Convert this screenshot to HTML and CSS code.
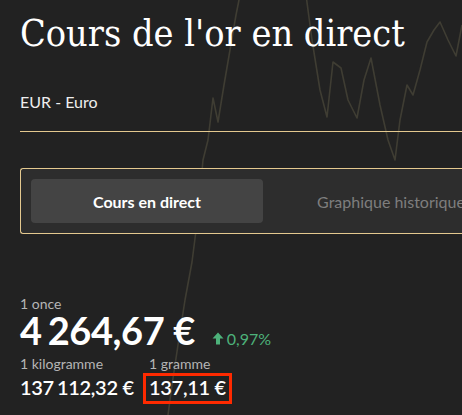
FILE: index.html
```html
<!DOCTYPE html>
<html lang="fr">
<head>
<meta charset="utf-8">
<title>Cours de l'or en direct</title>
<link rel="stylesheet" href="styles.css">
</head>
<body>
<div class="page">
  <svg class="chart-bg" width="462" height="415" viewBox="0 0 462 415" aria-hidden="true">
    <polyline class="chart-line" points="168,415 172,385 178,345 185,300 192,262 198,215 203,160 208,140 213,98 218,122 224,85 230,50 236,15 240,-5"/>
    <polyline class="chart-line" points="306,-5 312,40 320,90 327,117 333,62 341,68 348,100 357,118 364,80 371,58 380,105 388,140 395,160 400,120 407,85 413,95 420,70 427,42 434,30 440,22 448,40 456,56 462,25"/>
  </svg>
  <main class="content">
    <h1 class="title">Cours de l'or en direct</h1>
    <div class="currency">EUR - Euro</div>
    <div class="tabs">
      <div class="tab tab-active">Cours en direct</div>
      <div class="tab">Graphique historique</div>
    </div>
    <section class="prices">
      <div class="label label-once">1 once</div>
      <div class="main-row">
        <span class="main-price">4<span class="thin"> </span>264,67 €</span>
        <span class="change">
          <svg class="arrow" width="12" height="13" viewBox="0 0 12 13"><path d="M6 0.5 L11.5 6.5 L8 6.5 L8 12.5 L4 12.5 L4 6.5 L0.5 6.5 Z" fill="currentColor"/></svg>
          0,97%
        </span>
      </div>
      <div class="sub-row">
        <div class="sub sub-kg">
          <div class="label">1 kilogramme</div>
          <div class="sub-price">137<span class="thin-sm"> </span>112,32 €</div>
        </div>
        <div class="sub">
          <div class="label">1 gramme</div>
          <div class="sub-price highlight">137,11 €</div>
        </div>
      </div>
    </section>
  </main>
</div>
</body>
</html>
```
FILE: styles.css
```css
html, body {
  margin: 0;
  padding: 0;
  background: #222222;
}
body {
  width: 462px;
  height: 415px;
  overflow: hidden;
  font-family: Lato, "Open Sans", sans-serif;
  color: #f2f2f2;
}
.page {
  position: relative;
  width: 462px;
  height: 415px;
  overflow: hidden;
}
.chart-bg {
  position: absolute;
  left: 0;
  top: 0;
}
.chart-line {
  fill: none;
  stroke: #3f3d33;
  stroke-width: 1.6;
  stroke-linejoin: round;
}
.content {
  position: relative;
  padding: 0 0 0 20px;
}
.title {
  margin: 0;
  padding-top: 8px;
  font-family: "DejaVu Serif", serif;
  font-stretch: condensed;
  font-weight: 400;
  font-size: 37.5px;
  line-height: 50px;
  color: #ffffff;
  white-space: nowrap;
}
.currency {
  margin-top: 34px;
  font-size: 16px;
  line-height: 20px;
  padding-bottom: 19px;
  border-bottom: 1px solid #e4c98f;
  color: #eeeeee;
}
.tabs {
  margin-top: 36px;
  display: flex;
  gap: 12px;
  padding: 10px;
  border: 1px solid #e4c98f;
  border-right: none;
  border-radius: 3px 0 0 3px;
  background: #2d2d2d;
  width: 700px;
}
.tab {
  width: 232px;
  height: 44px;
  display: flex;
  align-items: center;
  justify-content: center;
  font-size: 16px;
  color: #7e7e7e;
  white-space: nowrap;
}
.tab-active {
  background: #444444;
  border-radius: 4px;
  color: #ffffff;
  font-weight: 700;
}
.prices {
  margin-top: 63px;
}
.label {
  font-size: 14px;
  line-height: 16px;
  color: #b5b5b5;
  white-space: nowrap;
}
.label-once {
  line-height: 14px;
}
.main-row {
  display: flex;
  align-items: baseline;
  gap: 17px;
}
.main-price {
  font-size: 38px;
  line-height: 38px;
  font-weight: 700;
  letter-spacing: -0.4px;
  color: #ffffff;
  white-space: nowrap;
}
.thin {
  display: inline-block;
  width: 6px;
}
.thin-sm {
  display: inline-block;
  width: 3px;
}
.change {
  font-size: 16px;
  color: #4db27a;
  display: inline-flex;
  align-items: baseline;
  gap: 3px;
}
.sub-row {
  margin-top: 6px;
  display: flex;
}
.sub-kg {
  width: 129px;
}
.sub .label {
  line-height: 17px;
}
.sub-price {
  padding-top: 5px;
  font-size: 20px;
  line-height: 21px;
  font-weight: 600;
  letter-spacing: -0.3px;
  color: #ffffff;
  white-space: nowrap;
}
.highlight {
  display: inline-block;
  margin: 1px 0 0 -6px;
  padding: 1px 3px 3px;
  border: 3px solid #ff2a00;
}
```
